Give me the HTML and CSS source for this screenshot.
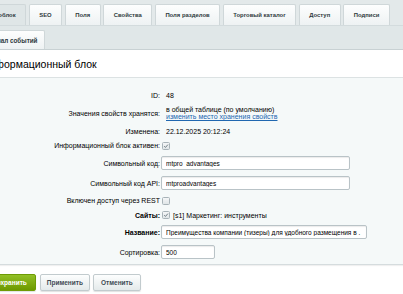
FILE: index.html
```html
<!DOCTYPE html>
<html lang="ru">
<head>
<meta charset="utf-8">
<link rel="stylesheet" href="styles.css">
</head>
<body>
<div class="tabs">
  <div class="tab active">Инфоблок</div>
  <div class="tab">SEO</div>
  <div class="tab">Поля</div>
  <div class="tab">Свойства</div>
  <div class="tab">Поля разделов</div>
  <div class="tab">Торговый каталог</div>
  <div class="tab">Доступ</div>
  <div class="tab">Подписи</div>
</div>
<div class="subtabs">
  <div class="subtab">Журнал событий</div>
</div>
<div class="title">Информационный блок</div>
<div class="content">
  <div class="row h14"><div class="lbl">ID:</div><div class="val txt">48</div></div>
  <div class="row h22"><div class="lbl">Значения свойств хранятся:</div><div class="val txt two">в общей таблице (по умолчанию)<br><a class="link" href="#">изменить место хранения свойств</a></div></div>
  <div class="row h14"><div class="lbl">Изменена:</div><div class="val txt">22.12.2025 20:12:24</div></div>
  <div class="row h15"><div class="lbl">Информационный блок активен:</div><div class="val"><span class="cb checked"><svg viewBox="0 0 8 8"><path d="M1.6 4.2 L3.3 5.9 L6.6 2.1" /></svg></span></div></div>
  <div class="row h20"><div class="lbl">Символьный код:</div><div class="val"><input class="inp w189" type="text" value="mtpro_advantages"></div></div>
  <div class="row h20"><div class="lbl">Символьный код API:</div><div class="val"><input class="inp w189" type="text" value="mtproadvantages"></div></div>
  <div class="row h15"><div class="lbl">Включен доступ через REST</div><div class="val"><span class="cb"></span></div></div>
  <div class="row h14"><div class="lbl bold">Сайты:</div><div class="val sites"><span class="cb checked"><svg viewBox="0 0 8 8"><path d="M1.6 4.2 L3.3 5.9 L6.6 2.1" /></svg></span><span class="stext">[s1] Маркетинг: инструменты</span></div></div>
  <div class="row h20"><div class="lbl bold">Название:</div><div class="val"><input class="inp w206" type="text" value="Преимущества компании (тизеры) для удобного размещения в ."></div></div>
  <div class="row h20"><div class="lbl">Сортировка:</div><div class="val"><input class="inp w54" type="text" value="500"></div></div>
</div>
<div class="buttons">
  <div class="btn save">Сохранить</div>
  <div class="btn apply">Применить</div>
  <div class="btn cancel">Отменить</div>
</div>
</body>
</html>
```
FILE: styles.css
```css
html, body {
  margin: 0;
  padding: 0;
}
body {
  width: 403px;
  height: 294px;
  overflow: hidden;
  background: #ffffff;
  font-family: "Liberation Sans", Arial, sans-serif;
  color: #000;
}
.tabs {
  display: flex;
  align-items: flex-end;
  gap: 2.6px;
  height: 25px;
  margin-left: -25px;
  background: #e3e9ea;
  box-sizing: border-box;
}
.tab {
  height: 21px;
  padding: 0 9.5px;
  display: flex;
  align-items: center;
  box-sizing: border-box;
  font-size: 5.9px;
  font-weight: bold;
  color: #2f3a40;
  background: linear-gradient(#fdfefe, #eef2f3);
  border: 1px solid #cfd7d9;
  border-bottom: none;
  border-radius: 2px 2px 0 0;
  white-space: nowrap;
}
.tab.active {
  background: #dfe6e7;
}
.subtabs {
  display: flex;
  align-items: flex-end;
  height: 25px;
  margin-left: -26px;
  background: #e0e7e8;
  border-top: 1px solid #d3dbdd;
  border-bottom: 1px solid #c8d1d3;
  box-sizing: border-box;
}
.subtab {
  height: 19px;
  padding: 0 7px 0 9px;
  display: flex;
  align-items: center;
  box-sizing: border-box;
  font-size: 6.3px;
  font-weight: bold;
  color: #2f3a40;
  background: linear-gradient(#fdfefe, #eef2f3);
  border: 1px solid #cfd7d9;
  border-bottom: none;
  border-radius: 2px 2px 0 0;
  white-space: nowrap;
}
.title {
  height: 28px;
  margin-left: -18px;
  display: flex;
  align-items: center;
  font-size: 10.5px;
  background: #fff;
  border-bottom: 1px solid #dce2e3;
  box-sizing: border-box;
}
.content {
  background: #f5f9f9;
  padding: 10px 0 2px;
  border-bottom: 1px solid #d5dcde;
  box-shadow: 0 1px 1px rgba(0,0,0,0.06);
}
.row {
  display: grid;
  grid-template-columns: 161px 1fr;
  align-items: center;
  font-size: 7px;
}
.h14 { height: 14px; }
.h15 { height: 15px; }
.h20 { height: 20px; }
.h22 { height: 22px; }
.lbl {
  text-align: right;
  padding-right: 1px;
  white-space: nowrap;
  color: #000;
}
.bold { font-weight: bold; }
.val {
  display: flex;
  align-items: center;
  white-space: nowrap;
}
.txt { padding-left: 5px; display: block; }
.two { line-height: 7.5px; }
.link {
  color: #2067b0;
  text-decoration: underline;
}
.cb {
  width: 8px;
  height: 8px;
  border: 1px solid #a8b3b8;
  border-radius: 1.5px;
  background: linear-gradient(#f4f6f7, #dfe5e7);
  box-sizing: border-box;
  display: flex;
  margin-left: 1px;
}
.cb svg {
  width: 6px;
  height: 6px;
  fill: none;
  stroke: #6e7b82;
  stroke-width: 1.3;
}
.stext { margin-left: 3px; }
.inp {
  height: 14px;
  border: 1px solid #b9c3c7;
  border-radius: 2px;
  background: #fff;
  box-shadow: inset 0 1px 1px rgba(0,0,0,0.08);
  font-family: "Liberation Sans", Arial, sans-serif;
  font-size: 6.5px;
  color: #000;
  padding: 0 4px;
  margin: 0;
  box-sizing: border-box;
  outline: none;
}
.w189 { width: 189px; }
.w206 { width: 206px; }
.w54 { width: 54px; }
.buttons {
  display: flex;
  align-items: center;
  padding-top: 9px;
  margin-left: -17px;
}
.btn {
  height: 17px;
  display: flex;
  align-items: center;
  box-sizing: border-box;
  font-size: 6.5px;
  font-weight: bold;
  color: #3f4b54;
  border: 1px solid #c2cbce;
  border-radius: 2px;
  background: linear-gradient(#fdfefe, #e4eaeb);
  box-shadow: 0 1px 1px rgba(0,0,0,0.12);
  white-space: nowrap;
}
.save {
  padding: 0 8px;
  color: #fff;
  background: linear-gradient(#92c026, #6d9900);
  border-color: #6e9b05;
}
.apply {
  padding: 0 6px;
  margin-left: 4px;
}
.cancel {
  padding: 0 7px;
  margin-left: 3px;
}
```
